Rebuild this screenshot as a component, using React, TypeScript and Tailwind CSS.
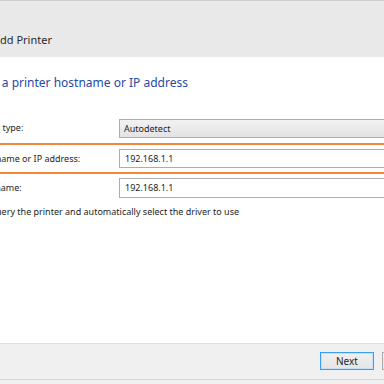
import React from "react";

function Label({ text, shift }: { text: string; shift: string }) {
  return (
    <div className="w-[119px] shrink-0 overflow-hidden whitespace-nowrap text-[9px] text-[#1e1e1e]">
      <span className={`inline-block ${shift}`}>{text}</span>
    </div>
  );
}

export default function App() {
  return (
    <div
      className="w-[384px] h-[384px] overflow-hidden bg-white flex flex-col"
      style={{ fontFamily: '"Noto Sans", "Open Sans", sans-serif' }}
    >
      <header className="h-[57px] shrink-0 bg-[#e9e9e9] border-t border-[#cdcdcd] pt-[25px] overflow-hidden whitespace-nowrap">
        <span className="inline-block -ml-[7px] text-[11px] leading-[28px] text-[#2b2b2b]">Add Printer</span>
      </header>

      <main className="flex-1 overflow-hidden">
        <h1 className="mt-[17px] whitespace-nowrap overflow-hidden text-[12px] leading-[18px] text-[#1f4aa8]">
          <span className="inline-block -ml-[28px]">Type a printer hostname or IP address</span>
        </h1>

        <div className="mt-[26px] flex items-center h-[20px]">
          <Label text="Printer type:" shift="-ml-[29px]" />
          <div className="flex-1 -mr-[10px] h-[19px] border border-[#acacac] bg-gradient-to-b from-[#f2f2f2] to-[#e3e3e3] pl-[4px] text-[9px] leading-[17px] text-[#1e1e1e]">
            Autodetect
          </div>
        </div>

        <div className="mt-[5px] h-[31px] border-y-2 border-[#f5873a] flex items-center">
          <Label text="Hostname or IP address:" shift="-ml-[24px]" />
          <div className="flex-1 -mr-[10px] h-[19px] border border-[#abadb3] bg-white pl-[5px] text-[9px] leading-[17px] text-[#1e1e1e]">
            192.168.1.1
          </div>
        </div>

        <div className="mt-[3px] flex items-center h-[21px]">
          <Label text="Port name:" shift="-ml-[25px]" />
          <div className="flex-1 -mr-[10px] h-[20px] border border-[#abadb3] bg-white pl-[5px] text-[9px] leading-[18px] text-[#1e1e1e]">
            192.168.1.1
          </div>
        </div>

        <div className="mt-[7px] overflow-hidden whitespace-nowrap text-[9px] text-[#1e1e1e]">
          <div className="inline-flex items-center gap-[4px] -ml-[28px]">
            <span className="inline-block w-[13px] h-[13px] border border-[#707070] bg-white" />
            <span>Query the printer and automatically select the driver to use</span>
          </div>
        </div>
      </main>

      <footer className="h-[41px] shrink-0 bg-[#f0f0f0] border-t border-[#dfdfdf] flex flex-col">
        <div className="flex justify-end gap-[8px] pt-[8px] -mr-[52px]">
          <button className="w-[54px] h-[18px] border border-[#3c9ef0] bg-gradient-to-b from-[#f0f0f0] to-[#e5e5e5] text-[10px] leading-[14px] text-[#1e1e1e] shadow-[inset_0_0_0_1px_#c4e1fa]">
            Next
          </button>
          <button className="w-[54px] h-[18px] border border-[#acacac] bg-gradient-to-b from-[#f0f0f0] to-[#e5e5e5] text-[10px] leading-[14px] text-[#1e1e1e]">
            Cancel
          </button>
        </div>
        <div className="mt-auto h-[5px] border-t border-[#d4d4d4] bg-[#f0f0f0]" />
      </footer>
    </div>
  );
}
